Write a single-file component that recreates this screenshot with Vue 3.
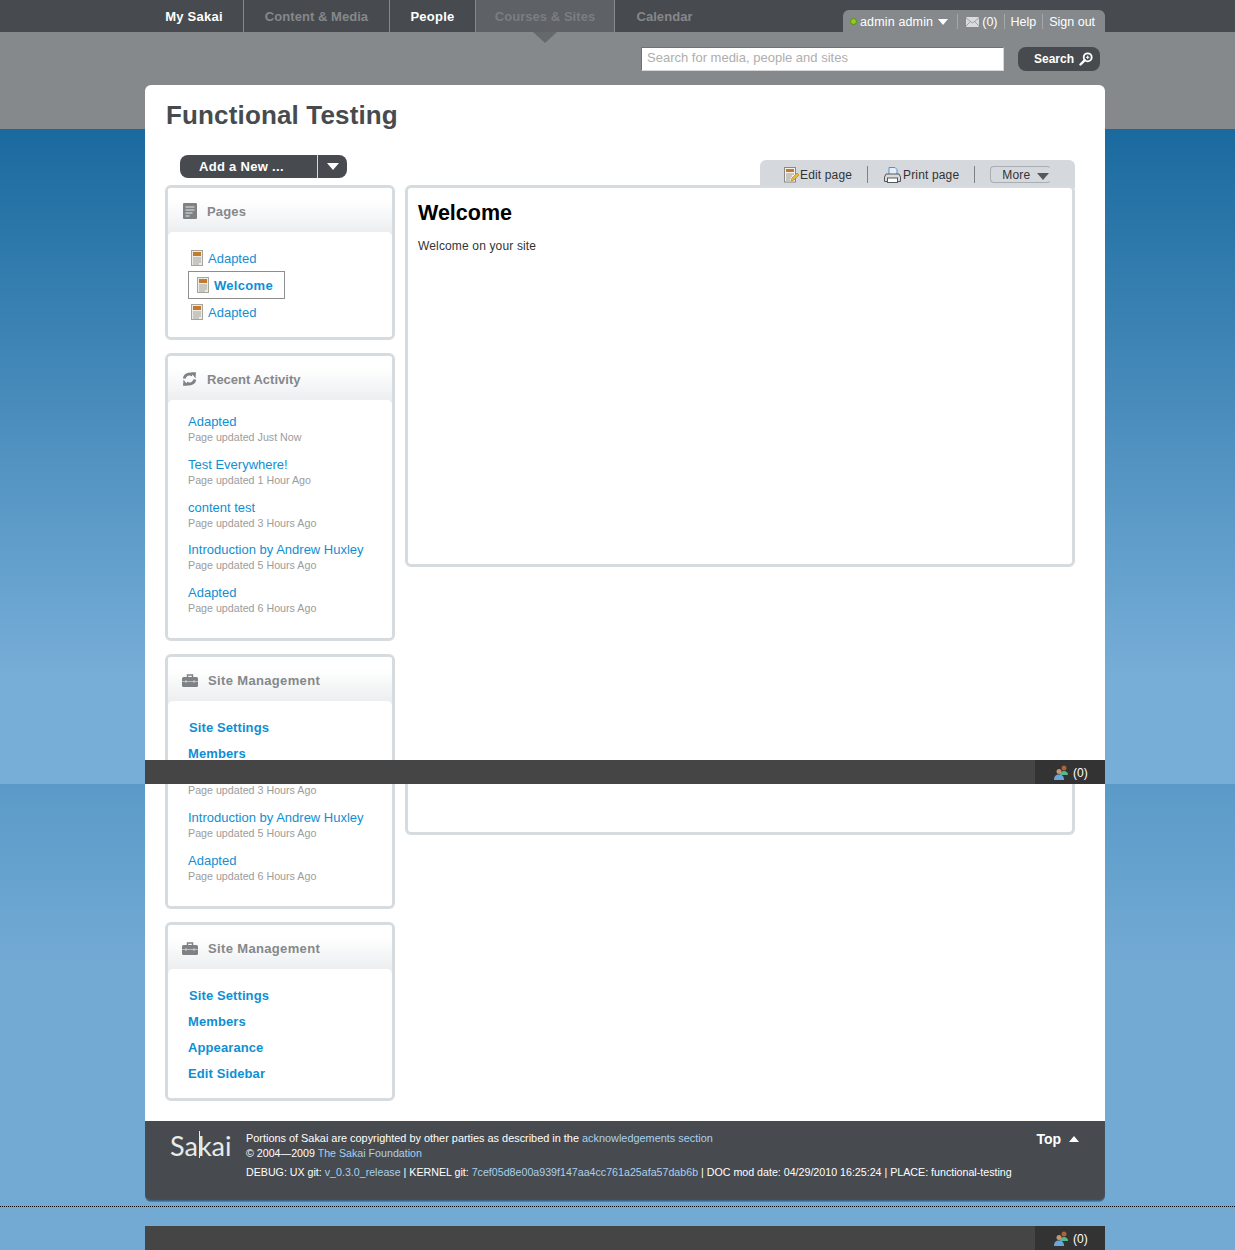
<script setup>
const nav = [
  { label: 'My Sakai', cls: 'lit', w: 99 },
  { label: 'Content & Media', cls: 'dim', w: 146 },
  { label: 'People', cls: 'lit', w: 86 },
  { label: 'Courses & Sites', cls: 'dim cur', w: 139 },
  { label: 'Calendar', cls: 'dim last', w: 99 }
]
const pages = [
  { label: 'Adapted', active: false },
  { label: 'Welcome', active: true },
  { label: 'Adapted', active: false }
]
const activity = [
  { title: 'Adapted', sub: 'Page updated Just Now' },
  { title: 'Test Everywhere!', sub: 'Page updated 1 Hour Ago' },
  { title: 'content test', sub: 'Page updated 3 Hours Ago' },
  { title: 'Introduction by Andrew Huxley', sub: 'Page updated 5 Hours Ago' },
  { title: 'Adapted', sub: 'Page updated 6 Hours Ago' }
]
const tail = activity.slice(3)
const mgmt = ['Site Settings', 'Members', 'Appearance', 'Edit Sidebar']
</script>

<template>
  <div class="shot">
    <section class="slice first">
      <nav class="topnav">
        <a v-for="n in nav" :key="n.label" class="tab" :class="n.cls" :style="{ width: n.w + 'px' }">{{ n.label }}</a>
        <div class="userbox">
          <i class="dot"></i><span class="uname">admin admin</span><i class="caret white"></i>
          <i class="sep first-sep"></i>
          <svg class="mail" width="13" height="10" viewBox="0 0 13 10"><rect width="13" height="10" rx="1" fill="#d9dbdd"/><path d="M0 1l6.500 5L13 1M0 9l4.500-4.500M13 9L8.500 4.500" fill="none" stroke="#8e9295" stroke-width=".8"/></svg>
          <span>(0)</span>
          <i class="sep"></i><span>Help</span><i class="sep"></i><span>Sign out</span>
        </div>
      </nav>
      <div class="searchrow">
        <div class="searchbox">Search for media, people and sites</div>
        <div class="searchbtn">Search
          <svg width="14" height="14" viewBox="0 0 14 14"><circle cx="8.700" cy="5.300" r="4" fill="none" stroke="#fff" stroke-width="1.800"/><path d="M5.800 8.200L1.500 12.500" stroke="#fff" stroke-width="2.400" stroke-linecap="round"/><path d="M7 5.300h3.400M8.700 3.600V7" stroke="#fff"/></svg>
        </div>
      </div>
      <div class="card">
        <h1 class="title">Functional Testing</h1>
        <div class="actions">
          <div class="addbtn"><span class="addlabel">Add a New ...</span><span class="addcaret"><i class="caret white big"></i></span></div>
          <div class="toolbar">
            <span class="tool t-edit">
              <svg width="16" height="16" viewBox="0 0 16 16"><rect x="1.500" y=".5" width="11" height="14.500" fill="#f4f2ec" stroke="#8a8a84"/><rect x="3" y="2" width="8" height="3" fill="#c47a2c"/><path d="M3 7h8M3 9h6M3 11h5M3 13h4" stroke="#9a9a94"/><path d="M8 14l1-3 5-5 2 2-5 5z" fill="#e8b93c" stroke="#a87d20" stroke-width=".6"/></svg>
              Edit page
            </span>
            <i class="tsep"></i>
            <span class="tool t-print">
              <svg width="17" height="16" viewBox="0 0 17 16"><path d="M5 .5h6l2 2v6H5z" fill="#e3eefa" stroke="#5d8fc4"/><path d="M2 7h13l1.500 3v4.500H.5V10z" fill="#d8dadb" stroke="#55585a"/><rect x="3.500" y="11" width="10" height="4.500" fill="#fff" stroke="#55585a"/></svg>
              Print page
            </span>
            <i class="tsep"></i>
            <span class="more">More <i class="caret gray"></i></span>
          </div>
        </div>
        <div class="columns">
          <aside class="side">
            <div class="panel">
              <div class="phead">
                <svg width="14" height="16" viewBox="0 0 14 16"><rect width="14" height="16" rx="1" fill="#7f8285"/><path d="M2.500 4h9M2.500 7h9M2.500 10h7M2.500 13h4" stroke="#e6e7e8" stroke-width="1.200"/></svg>
                <span>Pages</span>
              </div>
              <div class="pbody pagesbody">
                <a v-for="(p, i) in pages" :key="i" class="pagelink" :class="{ active: p.active }">
                  <svg width="12" height="16" viewBox="0 0 12 16"><rect x=".5" y=".5" width="11" height="15" fill="#ecebe6" stroke="#a5a5a0"/><rect x="2" y="2" width="8" height="4" fill="#c47a2c"/><path d="M2 8h8M2 10h8M2 12h8M2 14h6" stroke="#a3a39e"/></svg>
                  {{ p.label }}
                </a>
              </div>
            </div>
            <div class="panel">
              <div class="phead recent">
                <svg width="15" height="14" viewBox="0 0 15 14"><path d="M2.200 6.500A5.300 5.300 0 0 1 10.500 3" fill="none" stroke="#7f8285" stroke-width="2.800"/><path d="M9 .2L14 .2 13.500 6.500z" fill="#7f8285"/><path d="M12.800 7.500A5.300 5.300 0 0 1 4.500 11" fill="none" stroke="#7f8285" stroke-width="2.800"/><path d="M6 13.800L1 13.800 1.500 7.500z" fill="#7f8285"/></svg>
                <span>Recent Activity</span>
              </div>
              <div class="pbody activitybody">
                <div v-for="(a, i) in activity" :key="i" class="act">
                  <a class="acttitle">{{ a.title }}</a>
                  <div class="actsub">{{ a.sub }}</div>
                </div>
              </div>
            </div>
            <div class="panel clipped">
              <div class="phead mg">
                <svg width="16" height="13" viewBox="0 0 16 13"><path d="M5.500 3V1h5v2" fill="none" stroke="#7f8285" stroke-width="1.500"/><rect y="3" width="16" height="10" rx="1.500" fill="#7f8285"/><path d="M0 7.500h16" stroke="#c8cacb" stroke-width=".8"/><rect x="3" y="6.500" width="2" height="2" fill="#c8cacb"/><rect x="11" y="6.500" width="2" height="2" fill="#c8cacb"/></svg>
                <span>Site Management</span>
              </div>
              <div class="pbody mgmtbody">
                <a class="mlink firstm">Site Settings</a>
                <a class="mlink">Members</a>
              </div>
            </div>
          </aside>
          <main class="mainpanel tall">
            <h2 class="welcome">Welcome</h2>
            <p class="wtext">Welcome on your site</p>
          </main>
        </div>
      </div>
      <div class="chatbar">
        <div class="chat">
          <svg width="16" height="15" viewBox="0 0 16 15"><circle cx="10" cy="3" r="2.500" fill="#a8653a"/><path d="M6 10c0-3 2-4 4-4s4 1 4 4z" fill="#57b98a"/><circle cx="5" cy="6.500" r="2.500" fill="#c9966b"/><path d="M0 15c0-4 2-5.500 5-5.500s5 1.500 5 5.500z" fill="#6ba5dc"/></svg>
          <span>(0)</span>
        </div>
      </div>
    </section>

    <section class="slice second">
      <div class="card cont">
        <div class="columns">
          <aside class="side">
            <div class="panel open">
              <div class="pbody tailbody">
                <div class="actsub cut">Page updated 3 Hours Ago</div>
                <div v-for="(a, i) in tail" :key="i" class="act">
                  <a class="acttitle">{{ a.title }}</a>
                  <div class="actsub">{{ a.sub }}</div>
                </div>
              </div>
            </div>
            <div class="panel">
              <div class="phead mg">
                <svg width="16" height="13" viewBox="0 0 16 13"><path d="M5.500 3V1h5v2" fill="none" stroke="#7f8285" stroke-width="1.500"/><rect y="3" width="16" height="10" rx="1.500" fill="#7f8285"/><path d="M0 7.500h16" stroke="#c8cacb" stroke-width=".8"/><rect x="3" y="6.500" width="2" height="2" fill="#c8cacb"/><rect x="11" y="6.500" width="2" height="2" fill="#c8cacb"/></svg>
                <span>Site Management</span>
              </div>
              <div class="pbody mgmtbody">
                <a v-for="(m, i) in mgmt" :key="m" class="mlink" :class="{ firstm: i === 0 }">{{ m }}</a>
              </div>
            </div>
          </aside>
          <div class="mainpanel stub"></div>
        </div>
      </div>
      <footer class="foot">
        <div class="logo">Sa<span class="k">k</span>ai</div>
        <div class="foottext">
          <div class="portions">Portions of Sakai are copyrighted by other parties as described in the <a>acknowledgements section</a></div>
          <div>© 2004—2009 <a>The Sakai Foundation</a></div>
          <div class="debug">DEBUG: UX git: <a>v_0.3.0_release</a> | KERNEL git: <a>7cef05d8e00a939f147aa4cc761a25afa57dab6b</a> | DOC mod date: 04/29/2010 16:25:24 | PLACE: functional-testing</div>
        </div>
        <div class="top">Top <i class="caret up"></i></div>
      </footer>
      <div class="dotted"></div>
      <div class="chatbar flow">
        <div class="chat">
          <svg width="16" height="15" viewBox="0 0 16 15"><circle cx="10" cy="3" r="2.500" fill="#a8653a"/><path d="M6 10c0-3 2-4 4-4s4 1 4 4z" fill="#57b98a"/><circle cx="5" cy="6.500" r="2.500" fill="#c9966b"/><path d="M0 15c0-4 2-5.500 5-5.500s5 1.500 5 5.500z" fill="#6ba5dc"/></svg>
          <span>(0)</span>
        </div>
      </div>
    </section>
  </div>
</template>

<style>
html, body { margin: 0; padding: 0; }
</style>

<style scoped>
.shot { width: 1235px; font-family: "Liberation Sans", Arial, sans-serif; font-size: 12px; color: #333; }
.slice { position: relative; overflow: hidden; }
.first {
  height: 784px;
  background:
    linear-gradient(#85898c, #85898c) top / 100% 129px no-repeat,
    linear-gradient(#1a6a9f 129px, #77aed8 680px);
}
.second { height: 466px; background: linear-gradient(#5b9ac8 0, #72aad4 180px); }

.topnav { height: 32px; background: #474b4f; display: flex; padding-left: 145px; position: relative; }
.tab { display: flex; align-items: center; justify-content: center; height: 32px; box-sizing: border-box; font-size: 13px; font-weight: 700; letter-spacing: .25px; border-right: 1px solid #85898c; position: relative; }
.tab.lit { color: #fff; }
.tab.dim { color: #85888b; letter-spacing: .05px; }
.tab.cur { background: #5e6165; color: #7b7e81; }
.tab.cur::after { content: ""; position: absolute; left: 57px; top: 32px; border: 12px solid transparent; border-top: 11px solid #65686c; border-bottom: 0; }
.tab.last { border-right: 0; }
.userbox { position: absolute; left: 843px; top: 10px; width: 262px; height: 22px; box-sizing: border-box; padding: 1px 0 0 7px; border-radius: 6px 6px 0 0; background: #85898c; color: #fff; display: flex; align-items: center; font-size: 12.500px; white-space: nowrap; }
.uname { letter-spacing: .15px; }
.dot { width: 7px; height: 7px; border-radius: 50%; background: #8fce1a; border: 1px solid #5e8a10; box-sizing: border-box; margin-right: 3px; }
.userbox .caret { margin: 0 9px 0 5px; border-left-width: 5.500px; border-right-width: 5.500px; }
.mail { margin: 0 3px 0 8px; }
.sep { width: 1px; height: 15px; background: #a5a8aa; margin: 0 6px; }
.first-sep { margin: 0; }
.caret { display: inline-block; width: 0; height: 0; border-left: 5px solid transparent; border-right: 5px solid transparent; border-top: 6px solid #fff; }
.caret.big { border-left-width: 6px; border-right-width: 6px; border-top-width: 7px; }
.caret.gray { border-left-width: 6px; border-right-width: 6px; border-top-width: 7px; border-top-color: #55585b; margin-left: 3px; vertical-align: -1px; }
.caret.up { border-top: 0; border-bottom: 6px solid #fff; margin-left: 4px; vertical-align: 2px; }

.searchrow { height: 53px; display: flex; padding: 15px 0 0 641px; box-sizing: border-box; }
.searchbox { width: 363px; height: 24px; box-sizing: border-box; padding: 2px 0 0 5px; background: #fff; border: 1px solid #6e7275; border-bottom-color: #d5d7d8; border-right-color: #d5d7d8; color: #aeaeae; font-size: 13px; white-space: nowrap; line-height: 16px; }
.searchbtn { margin-left: 14px; width: 82px; height: 24px; box-sizing: border-box; background: #474b4f; border-radius: 8px; color: #fff; font-size: 12px; font-weight: 700; display: flex; align-items: center; padding-left: 16px; gap: 5px; }

.card { margin-left: 145px; width: 960px; background: #fff; border-radius: 6px 6px 0 0; padding: 0 30px 0 20px; box-sizing: border-box; height: 700px; }
.title { margin: 0; padding: 15px 0 0 1px; font-size: 26px; line-height: 31px; font-weight: 700; color: #474b4f; letter-spacing: .15px; height: 60px; box-sizing: border-box; }
.actions { height: 40px; display: flex; position: relative; }
.addbtn { margin: 10px 0 0 15px; width: 167px; height: 23px; background: #474b4f; border-radius: 8px; color: #fff; font-weight: 700; font-size: 13px; letter-spacing: .3px; display: flex; }
.addlabel { width: 118px; padding-left: 19px; line-height: 24px; border-right: 1px solid #d5d9dd; box-sizing: content-box; }
.addcaret { flex: 1; display: flex; align-items: center; justify-content: center; }
.toolbar { position: absolute; right: 0; top: 15px; width: 315px; height: 28px; box-sizing: border-box; background: #d5d9dd; border-radius: 6px 6px 0 0; display: flex; align-items: center; padding: 1px 0 0 23px; font-size: 12px; letter-spacing: .15px; color: #333; white-space: nowrap; }
.tool { display: inline-flex; align-items: center; gap: 1px; }
.t-print { gap: 2px; }
.tsep { width: 1px; height: 17px; background: #7f8285; margin: 0 16px 0 15px; }
.more { border: 1px solid #a9aeb2; border-right-color: transparent; border-radius: 4px; height: 17px; width: 61px; box-sizing: border-box; line-height: 16px; padding-left: 11px; margin-left: -1px; }

.columns { display: flex; gap: 10px; align-items: flex-start; }
.side { width: 230px; display: flex; flex-direction: column; gap: 13px; }
.panel { border: 3px solid #d5dbdf; border-radius: 6px; background: #fff; overflow: hidden; }
.phead { height: 49px; box-sizing: border-box; background: linear-gradient(#fff 25%, #eceef0 90%); display: flex; align-items: center; padding: 0 0 3px 15px; gap: 10px; color: #85888b; font-size: 13px; font-weight: 700; letter-spacing: .15px; }
.phead.mg { padding-left: 14px; letter-spacing: .35px; }
.phead.recent { padding-left: 14px; letter-spacing: 0; }
.pbody { margin-top: -5px; position: relative; background: #fff; border-radius: 5px 5px 0 0; }
.pagesbody { height: 105px; box-sizing: border-box; padding-top: 12px; padding-left: 20px; display: flex; flex-direction: column; align-items: flex-start; }
.pagelink { display: flex; align-items: center; gap: 5px; height: 27px; padding: 1px 0 0 3px; font-size: 13px; color: #0f8fd3; box-sizing: border-box; }
.pagelink.active { width: 97px; border: 1px solid #8e8e8e; font-weight: 700; letter-spacing: .3px; padding: 0 0 0 8px; height: 28px; margin-bottom: -1px; }
.activitybody { height: 238px; box-sizing: border-box; padding: 12px 0 0 20px; }
.act { height: 42.750px; }
.acttitle { display: block; font-size: 13px; height: 18px; line-height: 20px; color: #0f8fd3; }
.actsub { font-size: 10.700px; line-height: 14px; color: #9c9c9c; }
.clipped { height: 200px; }
.mgmtbody { padding: 17px 0 8px 20px; display: flex; flex-direction: column; }
.mlink { display: block; font-size: 13px; font-weight: 700; letter-spacing: .1px; height: 18px; line-height: 20px; margin-bottom: 8px; color: #0f8fd3; }
.firstm { margin-left: 1px; }
.mainpanel { width: 670px; box-sizing: border-box; border: 3px solid #d5dbdf; border-radius: 6px; background: #fff; }
.tall { height: 382px; position: relative; padding: 12px 0 0 10px; }
.welcome { margin: 0; font-size: 21.500px; line-height: 26px; color: #000; font-weight: 700; }
.wtext { margin: 12px 0 0; font-size: 12px; letter-spacing: .15px; line-height: 16px; color: #333; }

.chatbar { position: absolute; left: 145px; bottom: 0; width: 960px; height: 24px; background: #454545; }
.chatbar.flow { position: static; margin: 19px 0 0 145px; }
.chat { width: 70px; height: 24px; background: #333; display: flex; align-items: center; padding: 1px 0 0 19px; box-sizing: border-box; gap: 3px; color: #fff; font-size: 12px; float: right; }

.cont { height: 337px; border-radius: 0; }
.open { border-top: 0; border-radius: 0 0 6px 6px; }
.tailbody { height: 122px; box-sizing: border-box; padding: 0 0 0 20px; margin-top: 0; border-radius: 0; }
.cut { line-height: 13px; height: 24px; }
.stub { height: 51px; border-top: 0; border-radius: 0 0 6px 6px; }

.foot { margin-left: 145px; width: 960px; height: 80px; box-sizing: border-box; background: #474b4f; border-radius: 0 0 6px 6px; box-shadow: inset 0 -1px 1px #3f6a8e, 0 1px 0 #4f7fa8; color: #fff; position: relative; padding: 10px 0 0 101px; font-size: 10.670px; line-height: 15px; }
.portions { font-size: 10.900px; }
.foot a { color: #a9d0ee; }
.debug { margin-top: 4px; }
.logo { position: absolute; left: 25px; top: 8px; line-height: 34px; font-family: Lato, sans-serif; font-size: 27px; color: #e8eaeb; }
.k { position: relative; }
.k::before { content: ""; position: absolute; left: 1px; top: 2px; height: 27px; width: 1px; background: #e8eaeb; }
.top { position: absolute; right: 26px; top: 10px; font-size: 14px; font-weight: 700; line-height: 17px; }
.dotted { margin-top: 5px; border-top: 1px dotted #000; }
</style>
